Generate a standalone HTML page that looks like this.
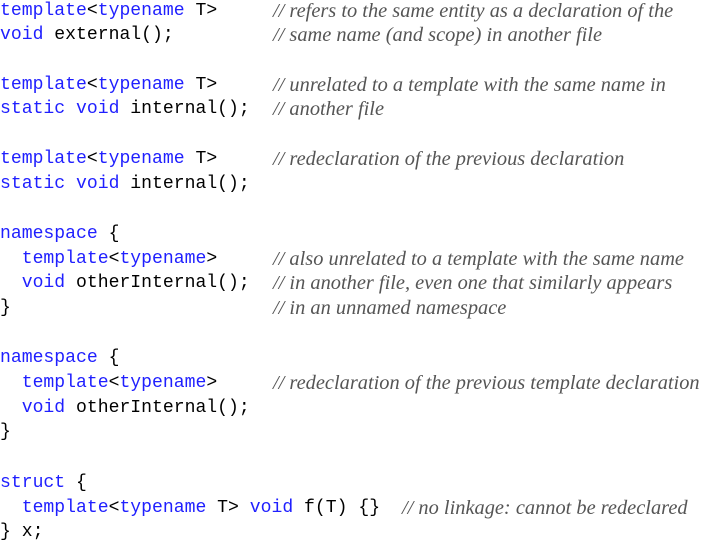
<!DOCTYPE html>
<html><head><meta charset="utf-8"><style>
html,body{margin:0;padding:0;background:#fff;width:705px;height:541px;overflow:hidden}
.l{position:absolute;left:0;height:25px;line-height:25px;white-space:pre;font-family:"Liberation Mono",monospace;font-size:18.1px;color:#000}
.k{color:#1f1fff}
.c{position:absolute;top:0;font-family:"Liberation Serif",serif;font-style:italic;font-size:20.4px;color:#555;white-space:pre}
</style></head><body>
<div class="l" style="top:-1px"><span class="k">template</span>&lt;<span class="k">typename</span> T><span class="c" style="left:273px">// refers to the same entity as a declaration of the</span></div>
<div class="l" style="top:23px"><span class="k">void</span> external();<span class="c" style="left:273px">// same name (and scope) in another file</span></div>
<div class="l" style="top:73px"><span class="k">template</span>&lt;<span class="k">typename</span> T><span class="c" style="left:273px">// unrelated to a template with the same name in</span></div>
<div class="l" style="top:97px"><span class="k">static</span> <span class="k">void</span> internal();<span class="c" style="left:273px">// another file</span></div>
<div class="l" style="top:147px"><span class="k">template</span>&lt;<span class="k">typename</span> T><span class="c" style="left:273px">// redeclaration of the previous declaration</span></div>
<div class="l" style="top:172px"><span class="k">static</span> <span class="k">void</span> internal();</div>
<div class="l" style="top:222px"><span class="k">namespace</span> {</div>
<div class="l" style="top:247px">  <span class="k">template</span>&lt;<span class="k">typename</span>><span class="c" style="left:273px">// also unrelated to a template with the same name</span></div>
<div class="l" style="top:271px">  <span class="k">void</span> otherInternal();<span class="c" style="left:273px">// in another file, even one that similarly appears</span></div>
<div class="l" style="top:296px">}<span class="c" style="left:273px">// in an unnamed namespace</span></div>
<div class="l" style="top:346px"><span class="k">namespace</span> {</div>
<div class="l" style="top:371px">  <span class="k">template</span>&lt;<span class="k">typename</span>><span class="c" style="left:273px">// redeclaration of the previous template declaration</span></div>
<div class="l" style="top:396px">  <span class="k">void</span> otherInternal();</div>
<div class="l" style="top:420px">}</div>
<div class="l" style="top:471px"><span class="k">struct</span> {</div>
<div class="l" style="top:496px">  <span class="k">template</span>&lt;<span class="k">typename</span> T> <span class="k">void</span> f(T) {}<span class="c" style="left:402px">// no linkage: cannot be redeclared</span></div>
<div class="l" style="top:520px">} x;</div>
</body></html>
